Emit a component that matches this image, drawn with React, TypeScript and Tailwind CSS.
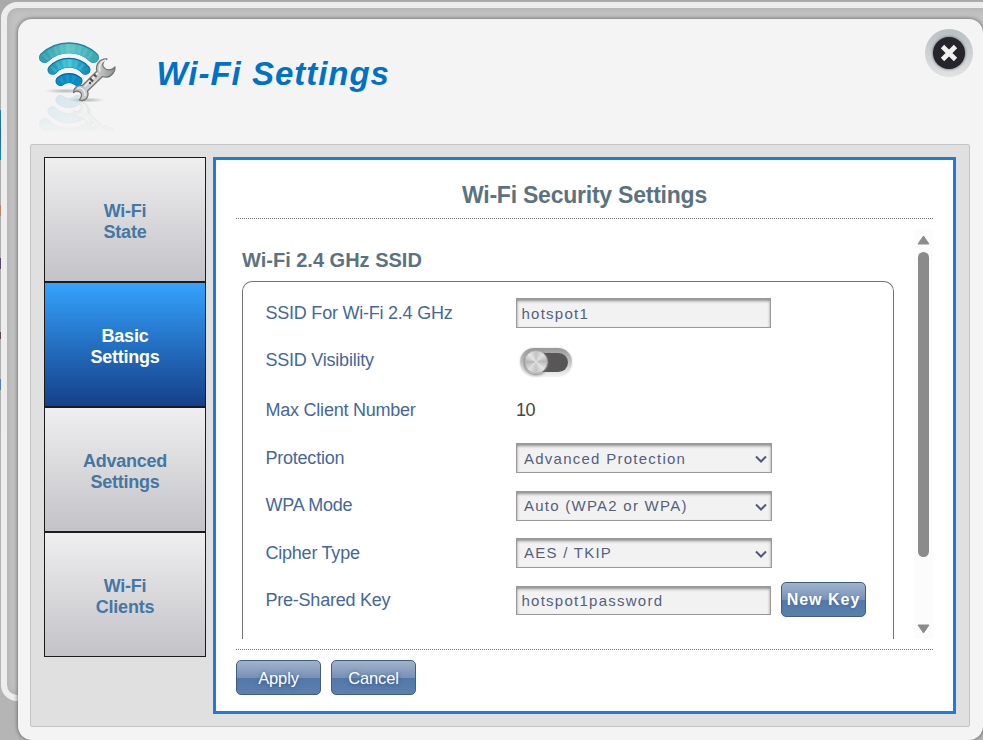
import type { ReactNode } from "react";

const tabs = [
  ["Wi-Fi", "State"],
  ["Basic", "Settings"],
  ["Advanced", "Settings"],
  ["Wi-Fi", "Clients"],
];

function WifiBands() {
  return (
    <g fill="none" strokeLinecap="round">
      <path d="M14.500 27.500C28 14.500 50 14.500 63.500 27.500" stroke="#2384a5" strokeWidth="11" />
      <path d="M14.500 27.900C28 15.200 50 15.200 63.500 27.900" stroke="url(#outerBand)" strokeWidth="9.500" />
      <path d="M14.500 27.900C28 15.200 50 15.200 63.500 27.900" stroke="#97dedb" strokeOpacity=".18" strokeWidth="8" strokeLinecap="butt" strokeDasharray="3 3" />
      <path d="M22.500 39.800C31 30.300 47 30.300 55.500 39.800" stroke="#12699c" strokeWidth="10" />
      <path d="M22.500 40.200C31 31 47 31 55.500 40.200" stroke="url(#middleBand)" strokeWidth="8.500" />
      <path d="M22.500 40.200C31 31 47 31 55.500 40.200" stroke="#8cecf2" strokeOpacity=".2" strokeWidth="7" strokeLinecap="butt" strokeDasharray="3 3" />
      <path d="M30.500 51C35 47 43 47 47.500 51" stroke="#086198" strokeWidth="10" />
      <path d="M30.500 51.300C35 47.500 43 47.500 47.500 51.300" stroke="#078cc5" strokeWidth="8.500" />
      <path d="M30.500 51.300C35 47.500 43 47.500 47.500 51.300" stroke="#39b3df" strokeOpacity=".3" strokeWidth="7" strokeLinecap="butt" strokeDasharray="3 3" />
    </g>
  );
}

function Wrench() {
  return (
    <g>
      <path
        d="M77 29C70 28.500 65 34.500 67 41L52.500 55.500C47.500 54.500 43.500 58 43.500 62.500C47 60 51 61.500 51.500 64.500C52 67 50 68.500 49.500 70C55 72 59.500 67 57.500 61L72.500 46.500C79 49 85 43.500 85 37C82 40.500 76 41 73.500 37C71.500 33.500 74 30.500 77 29Z"
        fill="url(#steel)" stroke="#737575" strokeWidth="1.300" strokeLinejoin="round"
      />
      <path d="M76 30C69 31.500 69 38 70 41.500M68 43L54.500 56.500M47 58.500C51 56.500 56 60.500 55 66" fill="none" stroke="#f0f1ef" strokeWidth="1.300" />
      <path d="M64 44.500L66.500 47M60 48.500L63 51.500" stroke="#514847" strokeWidth="2.300" />
      <circle cx="66" cy="47.500" r="1" fill="#bd9d93" />
      <circle cx="60" cy="53" r="1.200" fill="#5c4440" />
    </g>
  );
}

function WifiToolsIcon() {
  return (
    <svg className="h-[105px] w-[90px]" viewBox="3 0 90 105" aria-hidden="true">
      <defs>
        <linearGradient id="outerBand"><stop stopColor="#309fb0" /><stop offset=".5" stopColor="#61c7c6" /><stop offset="1" stopColor="#3aabb4" /></linearGradient>
        <linearGradient id="middleBand"><stop stopColor="#1698b8" /><stop offset=".5" stopColor="#3bc6d5" /><stop offset="1" stopColor="#148fba" /></linearGradient>
        <linearGradient id="steel"><stop stopColor="#b6bab8" /><stop offset=".5" stopColor="#d5d7d6" /><stop offset="1" stopColor="#909292" /></linearGradient>
        <radialGradient id="iconShadow"><stop stopColor="#777" stopOpacity=".5" /><stop offset="1" stopColor="#777" stopOpacity="0" /></radialGradient>
        <linearGradient id="reflectionFade" x1="0" y1="0" x2="0" y2="1"><stop stopColor="#fff" stopOpacity=".14" /><stop offset="1" stopColor="#fff" stopOpacity=".03" /></linearGradient>
        <mask id="reflectionMask" maskUnits="userSpaceOnUse" x="0" y="62" width="95" height="39"><rect y="62" width="95" height="39" fill="url(#reflectionFade)" /></mask>
      </defs>
      <ellipse cx="36" cy="61" rx="22" ry="2.500" fill="url(#iconShadow)" />
      <ellipse cx="57" cy="70" rx="18" ry="2.500" fill="url(#iconShadow)" />
      <g mask="url(#reflectionMask)">
        <g transform="translate(0 121) scale(1 -1)"><WifiBands /></g>
        <g transform="translate(0 143) scale(1 -1)"><Wrench /></g>
      </g>
      <WifiBands />
      <Wrench />
    </svg>
  );
}

const fieldStyle = "block w-full appearance-none rounded-none border border-[#999] bg-[#f2f2f2] text-[15px] tracking-[1.25px] text-[#555f7d] shadow-[inset_0_2px_3px_#8e8e8e] outline-none";

function TextField({ value, label, short = false }: { value: string; label: string; short?: boolean }) {
  return <input aria-label={label} defaultValue={value} className={`${fieldStyle} ${short ? "h-[29px] pb-px" : "h-[30px] pt-px"} pl-[4.500px]`} />;
}

function SelectField({ value, label, lowered = false }: { value: string; label: string; lowered?: boolean }) {
  return (
    <div className="grid w-[256px]">
      <select aria-label={label} defaultValue={value} className={`${fieldStyle} col-start-1 row-start-1 h-[30px] pl-[7px] pr-6 ${lowered ? "pt-[2px]" : ""}`}>
        <option>{value}</option>
      </select>
      <svg className="pointer-events-none col-start-1 row-start-1 mr-[5px] mt-px h-[8px] w-[12px] self-center justify-self-end" viewBox="0 0 12 8" aria-hidden="true">
        <path d="M1 1.500L6 6.500L11 1.500" fill="none" stroke="#4e5b75" strokeWidth="2" />
      </svg>
    </div>
  );
}

function Row({ label, rowClass, raised = false, children }: { label: string; rowClass: string; raised?: boolean; children: ReactNode }) {
  return (
    <div className={`flex items-start ${rowClass}`}>
      <div className={`w-[251px] shrink-0 pl-[0.500px] text-[18px] tracking-[-0.23px] text-[#446899] ${raised ? "leading-[28px]" : "leading-[30px]"}`}>{label}</div>
      {children}
    </div>
  );
}

function Toggle() {
  return (
    <button aria-label="SSID Visibility" className="ml-[4px] mt-[3px] flex h-[28px] w-[52px] items-center rounded-full bg-linear-to-b from-[#999] to-[#f1f1f1] px-[4px] shadow-[0_0_2px_#ccc]">
      <span className="flex h-[19px] w-full items-center rounded-full bg-[#595657]">
        <span className="h-[24px] w-[24px] shrink-0 rounded-full border border-[#aaa] bg-[conic-gradient(#c4c4c4,#e0e0e0_12%,#b8b8b8_24%,#e5e5e5_37%,#c4c4c4_50%,#dedede_62%,#b4b4b4_75%,#e7e7e7_88%,#c4c4c4)] shadow-[0_1px_3px_#777]" />
      </span>
    </button>
  );
}

function Button({ children, wide = false }: { children: ReactNode; wide?: boolean }) {
  return (
    <button className={`h-[35px] w-[85px] shrink-0 whitespace-nowrap rounded-[5px] border border-[#435d7e] bg-[linear-gradient(to_bottom,#a0b3cc_0%,#7791b7_51%,#5278aa_52%,#5b80ad_100%)] pt-px text-white ${wide ? "text-[16px] font-bold tracking-[1px] [text-shadow:0_1px_2px_#4a6b99]" : "text-[16.500px] tracking-[-0.15px] [text-shadow:0_1px_4px_#35547e]"}`}>
      {children}
    </button>
  );
}

export default function App() {
  return (
    <main className="relative h-[740px] w-[983px] overflow-hidden bg-linear-to-b from-[#aaa] to-[#b5b5b5] font-['Liberation_Sans',Arial,sans-serif]">
      <div className="absolute left-0 top-[110px] h-[50px] w-px bg-linear-to-b from-[#287ea3] via-[#2464a0] to-[#078dbb]" />
      <div className="absolute left-0 top-[205px] h-[11px] w-px bg-[#ba8567]" />
      <div className="absolute left-0 top-[258px] h-[11px] w-px bg-[#594866]" />
      <div className="absolute left-0 top-[332px] h-[7px] w-px bg-[#5a4942]" />
      <div className="absolute left-0 top-[379px] h-[11px] w-px bg-[#5781aa]" />
      <div className="absolute left-px top-[2px] h-[699px] w-[1010px] rounded-[16px] border-[6px] border-[#ededed] bg-[#c3c3c3] shadow-[inset_0_0_8px_#aaa]" />

      <section className="absolute left-[18px] top-[19px] flex h-[721px] w-[965px] flex-col rounded-[14px] bg-[#f4f4f4] px-[12px] pb-[13px] shadow-[0_0_4px_#555]">
        <header className="flex h-[125px] shrink-0 items-start pl-[3px]">
          <div className="mt-[11px]"><WifiToolsIcon /></div>
          <h1 className="ml-[33.500px] mt-[34px] whitespace-nowrap text-[33px] font-bold italic leading-[42px] tracking-[0.98px] text-[#0071c5]">Wi-Fi Settings</h1>
          <button aria-label="Close" className="-mr-[2px] ml-auto mt-[10px] flex h-[48px] w-[48px] items-center justify-center rounded-full bg-linear-to-b from-[#b8c0c2] to-[#e2e2e2]">
            <span className="flex h-[32px] w-[32px] items-center justify-center rounded-full bg-[#25252b] shadow-[0_0_3px_#4b5260]">
              <svg className="h-[18px] w-[18px]" viewBox="0 0 18 18" aria-hidden="true">
                <path d="M2.500 2.500L15.500 15.500M15.500 2.500L2.500 15.500" stroke="#f1f1f1" strokeWidth="4.800" />
              </svg>
            </span>
          </button>
        </header>

        <div className="flex h-[583px] w-[940px] shrink-0 items-start rounded-[2px] border border-[#c5c5c5] bg-[#e0e0e0] pl-[13px] pt-[12px]">
          <nav className="w-[162px] shrink-0">
            {tabs.map(([first, second], index) => (
              <button key={first + second} className={`flex h-[125px] w-full flex-col items-center justify-center border border-[#1b1b1b] pt-[5px] text-[18px] font-bold leading-[21px] tracking-[-0.23px] ${index === 1 ? "bg-linear-to-b from-[#35a3ff] to-[#154089] text-white" : "bg-linear-to-b from-[#efeff0] to-[#c3c3c8] text-[#4577a3]"}`}>
                <span>{first}</span><span>{second}</span>
              </button>
            ))}
          </nav>

          <section className="ml-[7px] h-[557px] w-[743px] shrink-0 border-[3px] border-[#1e7bd6] bg-white px-[20px]">
            <div className="h-[59px] border-b border-dotted border-[#747474] pt-[21px]">
              <h2 className="text-center text-[23px] font-bold leading-[28px] tracking-[-0.23px] text-[#5b7380]">Wi-Fi Security Settings</h2>
            </div>
            <div className="mt-[10px] flex h-[410px] overflow-hidden">
              <div className="w-[658px] shrink-0 pl-[6px] pt-[19px]">
                <h3 className="mb-[8px] text-[20px] font-bold leading-[25px] text-[#5b7380]">Wi-Fi 2.4 GHz SSID</h3>
                <div className="h-[380px] w-[652px] rounded-t-[10px] border border-b-0 border-[#737373] pl-[22px] pt-[16px]">
                  <Row label="SSID For Wi-Fi 2.4 GHz" rowClass="h-[47px]">
                    <div className="w-[255px]"><TextField value="hotspot1" label="SSID" /></div>
                  </Row>
                  <Row label="SSID Visibility" rowClass="h-[50px]"><Toggle /></Row>
                  <Row label="Max Client Number" rowClass="h-[48px]"><span className="text-[18px] leading-[30px] tracking-[-0.4px] text-[#444]">10</span></Row>
                  <Row label="Protection" rowClass="h-[48px]"><SelectField value="Advanced Protection" label="Protection" lowered /></Row>
                  <Row label="WPA Mode" rowClass="h-[47px]" raised><SelectField value="Auto (WPA2 or WPA)" label="WPA Mode" /></Row>
                  <Row label="Cipher Type" rowClass="h-[48px]"><SelectField value="AES / TKIP" label="Cipher Type" /></Row>
                  <Row label="Pre-Shared Key" rowClass="h-[48px]" raised>
                    <div className="w-[255px]"><TextField value="hotspot1password" label="Pre-Shared Key" short /></div>
                    <div className="-mt-[4px] ml-[10px]"><Button wide>New Key</Button></div>
                  </Row>
                </div>
              </div>
              <div className="ml-auto flex w-[19px] flex-col items-center bg-[#fcfcfc] pt-[6px]">
                <svg className="h-[10px] w-[13px]" viewBox="0 0 13 10" aria-hidden="true"><path d="M6.500 1L12 9H1Z" fill="#8b8b8b" stroke="#8b8b8b" strokeLinejoin="round" /></svg>
                <div className="mt-[7px] h-[305px] w-[11px] rounded-full bg-[#8b8b8b]" />
                <svg className="mb-[5px] mt-auto h-[10px] w-[13px]" viewBox="0 0 13 10" aria-hidden="true"><path d="M1 1H12L6.500 9Z" fill="#8b8b8b" stroke="#8b8b8b" strokeLinejoin="round" /></svg>
              </div>
            </div>
            <footer className="mt-[10px] flex gap-[10px] border-t border-dotted border-[#747474] pt-[10px]">
              <Button>Apply</Button>
              <Button>Cancel</Button>
            </footer>
          </section>
        </div>
      </section>
    </main>
  );
}
